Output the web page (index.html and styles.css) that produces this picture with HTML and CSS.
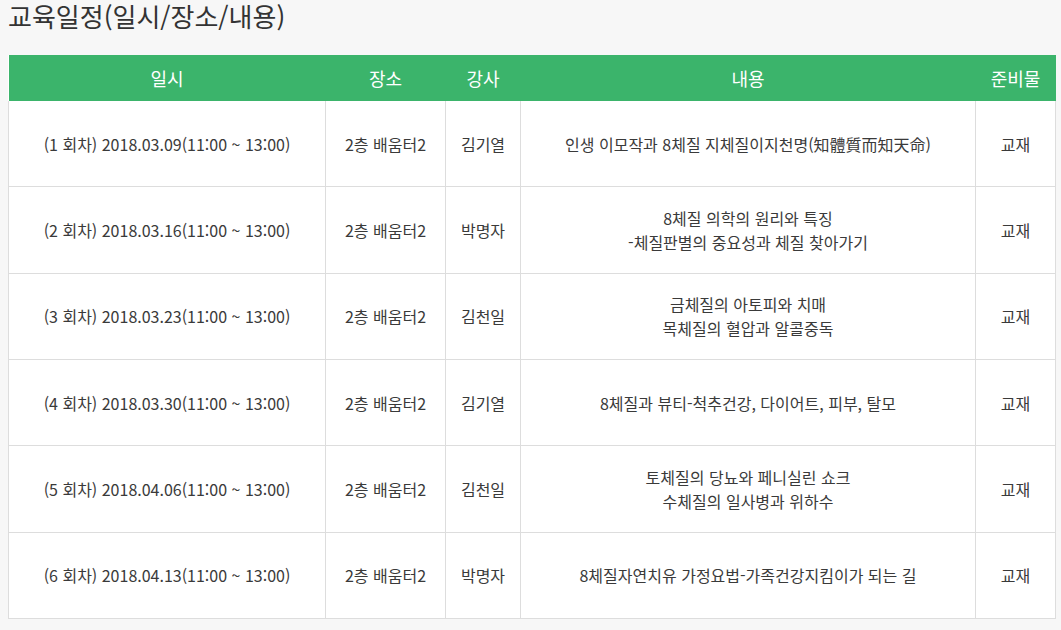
FILE: index.html
```html
<!DOCTYPE html>
<html lang="ko">
<head>
<meta charset="utf-8">
<link rel="stylesheet" href="styles.css">
</head>
<body>
<h2 class="title">교육일정(일시/장소/내용)</h2>
<table class="sched">
  <colgroup>
    <col class="c-date"><col class="c-place"><col class="c-teacher"><col class="c-content"><col class="c-prep">
  </colgroup>
  <thead>
    <tr><th>일시</th><th>장소</th><th>강사</th><th>내용</th><th>준비물</th></tr>
  </thead>
  <tbody>
    <tr><td>(1 회차) 2018.03.09(11:00 ~ 13:00)</td><td>2층 배움터2</td><td>김기열</td><td>인생 이모작과 8체질 지체질이지천명(知體質而知天命)</td><td>교재</td></tr>
    <tr><td>(2 회차) 2018.03.16(11:00 ~ 13:00)</td><td>2층 배움터2</td><td>박명자</td><td>8체질 의학의 원리와 특징<br>-체질판별의 중요성과 체질 찾아가기</td><td>교재</td></tr>
    <tr><td>(3 회차) 2018.03.23(11:00 ~ 13:00)</td><td>2층 배움터2</td><td>김천일</td><td>금체질의 아토피와 치매<br>목체질의 혈압과 알콜중독</td><td>교재</td></tr>
    <tr><td>(4 회차) 2018.03.30(11:00 ~ 13:00)</td><td>2층 배움터2</td><td>김기열</td><td>8체질과 뷰티-척추건강, 다이어트, 피부, 탈모</td><td>교재</td></tr>
    <tr><td>(5 회차) 2018.04.06(11:00 ~ 13:00)</td><td>2층 배움터2</td><td>김천일</td><td>토체질의 당뇨와 페니실린 쇼크<br>수체질의 일사병과 위하수</td><td>교재</td></tr>
    <tr><td>(6 회차) 2018.04.13(11:00 ~ 13:00)</td><td>2층 배움터2</td><td>박명자</td><td>8체질자연치유 가정요법-가족건강지킴이가 되는 길</td><td>교재</td></tr>
  </tbody>
</table>
</body>
</html>
```
FILE: styles.css
```css
html, body {
  margin: 0;
  padding: 0;
  background: #f7f7f7;
}
body {
  padding: 0 8px;
  font-family: "Noto Sans CJK KR", "Noto Sans", sans-serif;
  color: #444;
}
.title {
  margin: 0;
  padding: 0;
  font-size: 26px;
  font-weight: 400;
  line-height: 32px;
  color: #333;
  height: 55px;
}
.sched {
  width: 1047px;
  border-collapse: collapse;
  table-layout: fixed;
  background: #fff;
}
.c-date { width: 317px; }
.c-place { width: 120px; }
.c-teacher { width: 75px; }
.c-content { width: 455px; }
.c-prep { width: 80px; }
.sched th {
  background: #3bb46b;
  color: #fff;
  font-weight: 400;
  font-size: 18px;
  height: 46px;
  padding: 0;
  border: none;
}
.sched td {
  border: 1px solid #dddddd;
  text-align: center;
  font-size: 16px;
  line-height: 24px;
  height: 85.35px;
  padding: 0;
  color: #3a3a3a;
}
.sched tbody tr:first-child td { border-top: none; }
```
